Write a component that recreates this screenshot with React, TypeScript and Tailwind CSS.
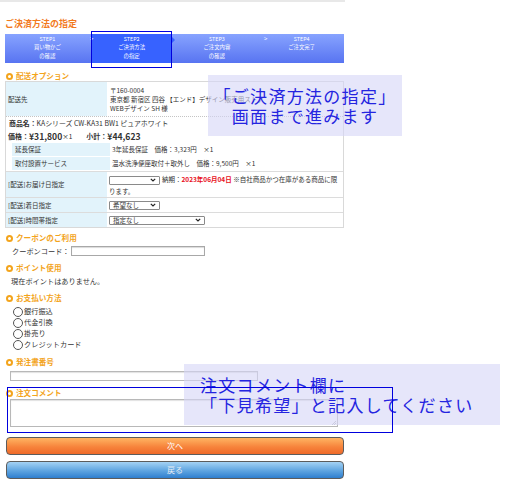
import React from "react";

function Head({ children }: { children: React.ReactNode }) {
  return (
    <div className="flex h-[10px] items-center">
      <span className="ml-[1px] mr-[3px] box-border h-[7px] w-[7px] rounded-full border-2 border-[#f3a41c]" />
      <span className="text-[7.6px] font-bold leading-[10px] text-[#f3a41c]">{children}</span>
    </div>
  );
}

function Chevron() {
  return (
    <svg width="6" height="4" viewBox="0 0 6 4" className="shrink-0">
      <polyline points="0.8,0.8 3,3 5.2,0.8" fill="none" stroke="#222" strokeWidth="1.2" />
    </svg>
  );
}

function SelectBox({ className, label }: { className: string; label: string }) {
  return (
    <span
      className={`inline-flex h-[9px] items-center justify-between rounded-[1px] border border-[#8a8a8a] bg-white pl-[3px] pr-[3px] align-middle leading-[7px] ${className}`}
    >
      <span>{label}</span>
      <Chevron />
    </span>
  );
}

const steps = [
  { no: "STEP1", lines: ["買い物かご", "の確認"] },
  { no: "STEP2", lines: ["ご決済方法", "の指定"] },
  { no: "STEP3", lines: ["ご注文内容", "の確認"] },
  { no: "STEP4", lines: ["ご注文完了"] },
];

function StepBar() {
  return (
    <div className="relative mt-[4px] flex h-[29px] bg-[linear-gradient(#87a3ff,#5874f1)] text-[5.4px] leading-[8.5px] text-white">
      {steps.map((s, i) => (
        <div key={s.no} className={i === 1 ? "h-full w-[85px] pl-[2px] pr-[3px]" : "h-full w-[85px]"}>
          <div
            className={
              i === 1
                ? "relative flex h-full flex-col items-center bg-[#3762ff] pt-[0.5px]"
                : "flex h-full flex-col items-center pt-[0.5px]"
            }
          >
            <span>{s.no}</span>
            {s.lines.map((l) => (
              <span key={l}>{l}</span>
            ))}
            {i === 1 && (
              <span className="absolute right-[-3px] top-[3px] h-0 w-0 border-y-[3px] border-l-[3px] border-y-transparent border-l-[#3762ff]" />
            )}
          </div>
        </div>
      ))}
      <span className="absolute left-[85px] top-[0.5px] text-[6px]">&gt;</span>
      <span className="absolute left-[259px] top-[0.5px] text-[6px]">&gt;</span>
    </div>
  );
}

export default function App() {
  return (
    <div className="relative h-[487px] w-[522px] overflow-hidden bg-white font-['Noto_Sans_CJK_JP','Noto_Sans',sans-serif] text-[#333]">
      <div className="h-[2px] w-[345px] bg-[#e8e8e8]" />
      <div className="ml-[5px] w-[339px]">
        <h1 className="mt-[16px] h-[12px] text-[9px] font-bold leading-[12px] text-[#f27a1e]">ご決済方法の指定</h1>
        <StepBar />

        <div className="mt-[8px]">
          <Head>配送オプション</Head>
        </div>

        {/* delivery table */}
        <div className="border border-[#d9d9d9] text-[6.5px] leading-[9px]">
          <div className="flex h-[34px]">
            <div className="flex w-[101px] items-center bg-[#e2f3fb] pl-[2px]">配送先</div>
            <div className="whitespace-nowrap pl-[3px] pt-[4px]">
              <div>〒160-0004</div>
              <div>東京都 新宿区 四谷 【エンド】デザイン販売用ストア</div>
              <div>WEBデザイン SH 様</div>
            </div>
          </div>

          <div className="border-t border-dotted border-[#c4c4c4] pb-[1px] pl-[2px] pt-[1px]">
            <div className="h-[10px] pl-[1px] text-[6.9px] leading-[10px]">
              <span className="font-bold">商品名：</span>KAシリーズ CW-KA31 BW1 ピュアホワイト
            </div>
            <div className="mt-[2px] flex h-[12px] items-center leading-[12px]">
              <span className="text-[7px] font-bold">価格：</span>
              <span className="text-[8.6px] font-bold">¥31,800</span>
              <span>×1</span>
              <span className="ml-[14px] text-[7px] font-bold">小計：</span>
              <span className="text-[8.6px] font-bold">¥44,623</span>
            </div>
            <div className="mt-[1px] flex h-[13px] items-center">
              <div className="ml-[4px] flex h-full w-[98px] items-center bg-[#e2f3fb] pl-[3px]">延長保証</div>
              <div className="pl-[2px]">3年延長保証　価格：3,323円　×1</div>
            </div>
            <div className="mt-[1px] flex h-[13px] items-center">
              <div className="ml-[4px] flex h-full w-[98px] items-center bg-[#e2f3fb] pl-[3px]">取付設置サービス</div>
              <div className="pl-[2px]">温水洗浄便座取付＋取外し　価格：9,500円　×1</div>
            </div>
          </div>

          <div className="flex h-[26px] border-t border-[#dcdcdc]">
            <div className="flex w-[101px] items-center bg-[#e2f3fb] pl-[2px]">[配送]お届け日指定</div>
            <div className="flex-1 pl-[2px] pr-[2px] pt-[1px] leading-[12px]">
              <SelectBox className="w-[51px]" label="" />
              <span className="ml-[2px]">納期：</span>
              <span className="font-bold text-[#e8101c]">2023年06月04日</span>
              <span> ※自社商品かつ在庫がある商品に限ります。</span>
            </div>
          </div>

          <div className="flex h-[15px] border-t border-[#dcdcdc]">
            <div className="flex w-[101px] items-center bg-[#e2f3fb] pl-[2px]">[配送]着日指定</div>
            <div className="flex items-center pl-[2px]">
              <SelectBox className="w-[51px]" label="希望なし" />
            </div>
          </div>

          <div className="flex h-[15px] border-t border-[#dcdcdc]">
            <div className="flex w-[101px] items-center bg-[#e2f3fb] pl-[2px]">[配送]時間帯指定</div>
            <div className="flex items-center pl-[2px]">
              <SelectBox className="w-[96px]" label="指定なし" />
            </div>
          </div>
        </div>

        <div className="text-[7.2px]">
          <div className="mt-[5px]">
            <Head>クーポンのご利用</Head>
          </div>
          <div className="mt-[2px] flex h-[12px] items-center pl-[7px]">
            <span>クーポンコード：</span>
            <span className="ml-[1px] h-[10px] w-[134px] border border-[#a8a8a8] bg-white shadow-[inset_0_1px_1px_rgba(0,0,0,0.15)]" />
          </div>

          <div className="mt-[6px]">
            <Head>ポイント使用</Head>
          </div>
          <div className="mt-[3px] flex h-[11px] items-center pl-[6px]">現在ポイントはありません。</div>

          <div className="mt-[6px]">
            <Head>お支払い方法</Head>
          </div>
          <div className="mt-[3px] pl-[8px]">
            {["銀行振込", "代金引換", "掛売り", "クレジットカード"].map((t) => (
              <div key={t} className="flex h-[11px] items-center">
                <span className="box-border h-[10px] w-[10px] rounded-full border border-[#555] bg-white" />
                <span className="ml-[1px]">{t}</span>
              </div>
            ))}
          </div>

          <div className="mt-[7px]">
            <Head>発注書番号</Head>
          </div>
          <div className="ml-[5px] mt-[4px] h-[10px] w-[248px] border border-[#b8b8b8] bg-white shadow-[inset_0_1px_1px_rgba(0,0,0,0.12)]" />

          <div className="mt-[7px]">
            <Head>注文コメント</Head>
          </div>
          <div className="relative ml-[5px] mt-[1px] h-[28px] w-[328px] border border-[#b8b8b8] bg-white shadow-[inset_0_1px_1px_rgba(0,0,0,0.12)]">
            <svg width="5" height="5" viewBox="0 0 5 5" className="absolute bottom-[1px] right-[1px]">
              <line x1="1" y1="5" x2="5" y2="1" stroke="#999" strokeWidth="0.7" />
              <line x1="3" y1="5" x2="5" y2="3" stroke="#999" strokeWidth="0.7" />
            </svg>
          </div>
        </div>

        <div className="ml-[1px] mt-[10px] flex h-[18px] items-center justify-center rounded-[4px] border border-[#5c5c5c] bg-[linear-gradient(#ffb462,#f7843c_55%,#ef6a2a)] text-[8px] text-white">
          次へ
        </div>
        <div className="ml-[1px] mt-[6px] flex h-[18px] items-center justify-center rounded-[4px] border border-[#5c5c5c] bg-[linear-gradient(#a4d2f4,#5ea4e0_55%,#2f7fcf)] text-[8px] text-[#e4ecf4]">
          戻る
        </div>
      </div>

      {/* callouts */}
      <div className="absolute left-[91px] top-[31px] h-[37px] w-[81px] border border-[#0000dd]" />
      <div className="absolute left-[208px] top-[75px] flex h-[61px] w-[194px] flex-col items-center justify-center bg-[rgba(214,214,246,0.6)] text-[17px] leading-[20px] tracking-[1.3px] text-[#2424e0]">
        <span>「ご決済方法の指定」</span>
        <span>画面まで進みます</span>
      </div>
      <div className="absolute left-[184px] top-[364px] flex h-[61px] w-[316px] flex-col justify-center bg-[rgba(214,214,246,0.6)] pl-[16px] text-[17px] leading-[20px] tracking-[1.3px] text-[#2424e0]">
        <span>注文コメント欄に</span>
        <span>「下見希望」と記入してください</span>
      </div>
      <div className="absolute left-[7px] top-[387px] h-[46px] w-[386px] border border-[#0000dd]" />
    </div>
  );
}
